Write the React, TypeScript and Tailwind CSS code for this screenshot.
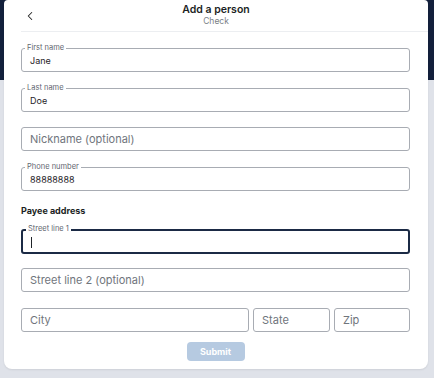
import { ChevronLeft } from 'lucide-react';

interface FieldProps {
  label?: string;
  value?: string;
  placeholder?: string;
  focused?: boolean;
  className?: string;
}

function Field({ label, value, placeholder, focused = false, className = '' }: FieldProps) {
  return (
    <div
      className={`relative flex h-[24px] items-center rounded-[3px] bg-white px-[8px] ${
        focused ? 'border-2 border-[#1b2a45]' : 'border border-[#a8acb3]'
      } ${className}`}
    >
      {label && (
        <span
          className={`absolute left-[3px] bg-white px-[2px] text-[7.5px] leading-none text-[#5f6670] ${
            focused ? 'top-[-6px]' : 'top-[-5px]'
          }`}
        >
          {label}
        </span>
      )}
      {value !== undefined ? (
        <span className="pt-px text-[9px] text-[#1f2328]">
          {value || <span className="inline-block h-[11px] w-px translate-y-[2px] bg-[#1f2328]" />}
        </span>
      ) : (
        <span className="text-[11px] text-[#70757c]">{placeholder}</span>
      )}
    </div>
  );
}

export default function App() {
  return (
    <div className="h-[378px] w-[434px] overflow-hidden bg-[linear-gradient(to_bottom,#13203c_80px,#dfe2e9_80px)] px-[4px] font-['Inter','Roboto',sans-serif]">
      <div className="h-[369px] w-[424px] rounded-t-[4px] rounded-b-[8px] bg-white shadow-[0_1px_2px_rgba(0,0,0,0.08)]">
        {/* Header */}
        <div className="relative ml-[17px] flex h-[32px] flex-col items-center border-b border-[#eceef1] pt-[3px]">
          <ChevronLeft className="absolute left-[2px] top-[9px] h-[14px] w-[14px] text-[#222]" strokeWidth={1.75} />
          <div className="mr-[17px] text-[10.5px] font-semibold leading-[13px] text-[#1c1f24]">Add a person</div>
          <div className="mr-[17px] text-[8.5px] leading-[11px] text-[#7a7f86]">Check</div>
        </div>

        {/* Form */}
        <div className="flex flex-col pl-[17px] pr-[18px] pt-[16px]">
          <Field label="First name" value="Jane" />
          <Field label="Last name" value="Doe" className="mt-[16px]" />
          <Field placeholder="Nickname (optional)" className="mt-[15px]" />
          <Field label="Phone number" value="88888888" className="mt-[16px]" />

          <div className="mt-[13px] text-[9px] font-bold leading-[14px] text-[#1c1f24]">Payee address</div>

          <Field label="Street line 1" value="" focused className="mt-[11px] h-[25px]" />
          <Field placeholder="Street line 2 (optional)" className="mt-[14px]" />

          <div className="mt-[16px] flex gap-[4px]">
            <Field placeholder="City" className="flex-1" />
            <Field placeholder="State" className="w-[77px]" />
            <Field placeholder="Zip" className="w-[76px]" />
          </div>

          <div className="mt-[10px] flex justify-center">
            <button
              type="button"
              disabled
              className="h-[19px] w-[58px] rounded-[4px] bg-[#b6cae1] text-[9px] font-bold text-white"
            >
              Submit
            </button>
          </div>
        </div>
      </div>
    </div>
  );
}
